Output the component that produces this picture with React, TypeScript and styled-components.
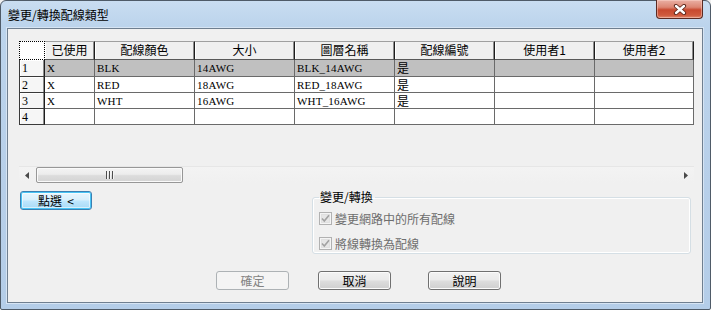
import React from 'react';
import styled, { createGlobalStyle, css } from 'styled-components';

const Global = createGlobalStyle`
  html, body { margin: 0; padding: 0; background: #f0f0f0; }
  body { font-family: "Noto Sans CJK TC", "Liberation Sans", sans-serif; font-size: 12px; color: #000; }
`;

const UI_FONT = `"Noto Sans CJK TC", "Liberation Sans", sans-serif`;
const CELL_FONT = `"Liberation Serif", "Noto Sans CJK TC", serif`;

const Window = styled.div`
  box-sizing: border-box;
  width: 711px;
  height: 310px;
  border: 1px solid #4f5b68;
  border-radius: 6px 6px 2px 2px;
  background: linear-gradient(180deg, #c9ddf1 0px, #bcd4ec 24px, #b7cfe9 60%, #b4cde8 100%);
  padding: 0 7px 6px 6px;
  display: flex;
  flex-direction: column;
`;

const TitleBar = styled.div`
  height: 27px;
  display: flex;
  justify-content: space-between;
  align-items: flex-start;
`;

const TitleText = styled.div`
  margin: 6px 0 0 1px;
  font: 12px/16px ${UI_FONT};
  color: #000;
`;

const CloseButton = styled.div`
  box-sizing: border-box;
  width: 47px;
  height: 19px;
  margin-top: -1px;
  border: 1px solid #5b2a22;
  border-top: none;
  border-radius: 0 0 4px 4px;
  background: linear-gradient(180deg, #eab0a4 0%, #dc8673 40%, #c8492f 55%, #cf5a3d 85%, #e08b70 100%);
  box-shadow: inset 0 0 0 1px rgba(255, 220, 210, 0.45);
  display: flex;
  align-items: center;
  justify-content: center;
`;

const Client = styled.div`
  box-sizing: border-box;
  flex: 1;
  border: 1px solid #6f7f90;
  box-shadow: 0 0 0 1px #d6e4f3;
  background: #f0f0f0;
  padding: 12px 0 0 11px;
  display: flex;
  flex-direction: column;
`;

const GridBox = styled.div`
  width: 675px;
  height: 142px;
  display: flex;
  flex-direction: column;
`;

const GridRow = styled.div<{ $h: number }>`
  display: grid;
  grid-template-columns: 26px 50px 100px 100px 100px 100px 100px 99px;
  height: ${p => p.$h}px;
`;

const CornerCell = styled.div`
  box-sizing: border-box;
  border: 1px dotted #000;
  background: #fff;
`;

const HeadCell = styled.div`
  box-sizing: border-box;
  border-top: 1px solid #a0a0a0;
  border-right: 1px solid #1e1e1e;
  border-bottom: 1px solid #5a5a5a;
  background: #f0f0f0;
  box-shadow: inset -1px 0 0 #8c8c8c, inset 1px 0 0 #ffffff;
  text-align: center;
  font: 12px/16px ${UI_FONT};
  color: #000;
  white-space: nowrap;
  overflow: hidden;
`;

const RowHead = styled.div`
  box-sizing: border-box;
  border-left: 1px solid #3a3a3a;
  border-right: 1px solid #1e1e1e;
  border-bottom: 1px solid #3a3a3a;
  background: #f6f6f6;
  box-shadow: inset -1px 0 0 #8c8c8c, inset 1px 1px 0 #ffffff;
  padding-left: 2px;
  display: flex;
  align-items: center;
  font: 12px/14px ${CELL_FONT};
  color: #000;
`;

const DataCell = styled.div<{ $sel?: boolean }>`
  box-sizing: border-box;
  border-right: 1px solid #6a6a6a;
  border-bottom: 1px solid #6a6a6a;
  background: ${p => (p.$sel ? '#c0c0c0' : '#ffffff')};
  padding-left: 2px;
  display: flex;
  align-items: center;
  font: 11px/14px ${CELL_FONT};
  letter-spacing: 0.2px;
  color: #000;
  white-space: nowrap;
  overflow: hidden;
`;

const CjkText = styled.span`
  font: 12px/14px ${UI_FONT};
  letter-spacing: 0;
`;

const GridFiller = styled.div`
  flex: 1;
  background: #f0f0f0;
`;

const HScroll = styled.div`
  box-sizing: border-box;
  height: 17px;
  display: flex;
  align-items: stretch;
  border-top: 1px solid #e6e6e6;
  background: linear-gradient(180deg, #f3f3f3 0%, #f0f0f0 100%);
`;

const ArrowBox = styled.div`
  width: 17px;
  display: flex;
  align-items: center;
  justify-content: center;
`;

const Thumb = styled.div`
  box-sizing: border-box;
  width: 147px;
  height: 16px;
  border: 1px solid #979797;
  border-radius: 2px;
  background: linear-gradient(180deg, #f4f4f4 0%, #ececec 45%, #dcdcdc 55%, #d4d4d4 100%);
  box-shadow: inset 0 0 0 1px #fafafa;
  display: flex;
  align-items: center;
  justify-content: center;
`;

const TrackSpace = styled.div`
  flex: 1;
`;

const MiddleRow = styled.div`
  display: flex;
  align-items: flex-start;
  margin-top: 7px;
`;

const PushButton = styled.button<{ $ml?: number; $primary?: boolean; $mt?: number }>`
  box-sizing: border-box;
  width: ${p => (p.$primary ? 72 : 73)}px;
  height: 19px;
  margin: ${p => p.$mt ?? 0}px 0 0 ${p => p.$ml ?? 0}px;
  padding: 0;
  border: 1px solid #707070;
  border-radius: 3px;
  background: linear-gradient(180deg, #f2f2f2 0%, #ebebeb 45%, #dddddd 55%, #cfcfcf 100%);
  box-shadow: inset 0 0 0 1px #fbfbfb;
  font: 12px/16px ${UI_FONT};
  color: #000;
  text-align: center;
  ${p =>
    p.$primary &&
    css`
      border-color: #3c7fb1;
      background: linear-gradient(180deg, #eaf6fd 0%, #d9f0fc 45%, #bee6fd 55%, #a7d9f5 100%);
      box-shadow: inset 0 0 0 1px #48c4f5, inset 0 0 0 2px rgba(255, 255, 255, 0.55);
    `}
  &:disabled {
    border-color: #adb2b5;
    background: #f4f4f4;
    box-shadow: none;
    color: #838383;
  }
`;

const Group = styled.fieldset`
  box-sizing: border-box;
  width: 379px;
  margin: 0 0 0 220px;
  padding: 6px 6px 1px 6px;
  border: 1px solid #d5dfe5;
  border-radius: 3px;
  box-shadow: inset 0 0 0 1px #ffffff;
  display: flex;
  flex-direction: column;
  gap: 8px;
`;

const Legend = styled.legend`
  padding: 0 2px 0 1px;
  font: 12px/14px ${UI_FONT};
  color: #000;
`;

const CheckRow = styled.div`
  height: 17px;
  display: flex;
  align-items: center;
  gap: 3px;
`;

const CheckLabel = styled.span`
  font: 12px/17px ${UI_FONT};
  color: #6d6d6d;
`;

const BottomRow = styled.div`
  display: flex;
  margin-top: 17px;
`;

const CheckBox = () => (
  <svg width="13" height="13" viewBox="0 0 13 13">
    <rect x="0.5" y="0.5" width="12" height="12" fill="#f4f4f4" stroke="#b1b1b1" />
    <rect x="2.5" y="2.5" width="8" height="8" fill="#e6e6e6" stroke="#e0e0e0" />
    <path d="M3 6.5 L5.3 9 L10 3.2" fill="none" stroke="#a2a2a2" strokeWidth="1.6" />
  </svg>
);

const CloseX = () => (
  <svg width="14" height="11" viewBox="0 0 14 11">
    <path d="M3 2 L11 9 M11 2 L3 9" stroke="#5a2418" strokeWidth="4.2" strokeLinecap="round" />
    <path d="M3 2 L11 9 M11 2 L3 9" stroke="#ffffff" strokeWidth="2.4" strokeLinecap="round" />
  </svg>
);

const LeftArrow = () => (
  <svg width="5" height="7" viewBox="0 0 5 7">
    <path d="M4 0 L0 3.5 L4 7 Z" fill="#4a4a4a" />
  </svg>
);

const RightArrow = () => (
  <svg width="5" height="7" viewBox="0 0 5 7">
    <path d="M1 0 L5 3.5 L1 7 Z" fill="#4a4a4a" />
  </svg>
);

const Grip = () => (
  <svg width="8" height="8" viewBox="0 0 8 8">
    <path d="M0.5 0 V8 M3.5 0 V8 M6.5 0 V8" stroke="#4d4d4d" strokeWidth="1" />
    <path d="M1.5 0 V8 M4.5 0 V8 M7.5 0 V8" stroke="#f4f4f4" strokeWidth="1" />
  </svg>
);

const headers = ['已使用', '配線顏色', '大小', '圖層名稱', '配線編號', '使用者1', '使用者2'];

const rows = [
  ['X', 'BLK', '14AWG', 'BLK_14AWG', '是', '', ''],
  ['X', 'RED', '18AWG', 'RED_18AWG', '是', '', ''],
  ['X', 'WHT', '16AWG', 'WHT_16AWG', '是', '', ''],
  ['', '', '', '', '', '', ''],
];

const isCjk = (s: string) => /[\u4e00-\u9fff]/.test(s);

export default function App() {
  return (
    <>
      <Global />
      <Window>
        <TitleBar>
          <TitleText>變更/轉換配線類型</TitleText>
          <CloseButton>
            <CloseX />
          </CloseButton>
        </TitleBar>
        <Client>
          <GridBox>
            <GridRow $h={19}>
              <CornerCell />
              {headers.map(h => (
                <HeadCell key={h}>{h}</HeadCell>
              ))}
            </GridRow>
            {rows.map((r, i) => (
              <GridRow key={i} $h={i === 0 ? 17 : 16}>
                <RowHead>{i + 1}</RowHead>
                {r.map((c, j) => (
                  <DataCell key={j} $sel={i === 0}>
                    {isCjk(c) ? <CjkText>{c}</CjkText> : c}
                  </DataCell>
                ))}
              </GridRow>
            ))}
            <GridFiller />
            <HScroll>
              <ArrowBox>
                <LeftArrow />
              </ArrowBox>
              <Thumb>
                <Grip />
              </Thumb>
              <TrackSpace />
              <ArrowBox>
                <RightArrow />
              </ArrowBox>
            </HScroll>
          </GridBox>
          <MiddleRow>
            <PushButton $primary $ml={1} $mt={1}>
              點選&nbsp; &lt;
            </PushButton>
            <Group>
              <Legend>變更/轉換</Legend>
              <CheckRow>
                <CheckBox />
                <CheckLabel>變更網路中的所有配線</CheckLabel>
              </CheckRow>
              <CheckRow>
                <CheckBox />
                <CheckLabel>將線轉換為配線</CheckLabel>
              </CheckRow>
            </Group>
          </MiddleRow>
          <BottomRow>
            <PushButton $ml={197} disabled>
              確定
            </PushButton>
            <PushButton $ml={29}>取消</PushButton>
            <PushButton $ml={37}>說明</PushButton>
          </BottomRow>
        </Client>
      </Window>
    </>
  );
}
